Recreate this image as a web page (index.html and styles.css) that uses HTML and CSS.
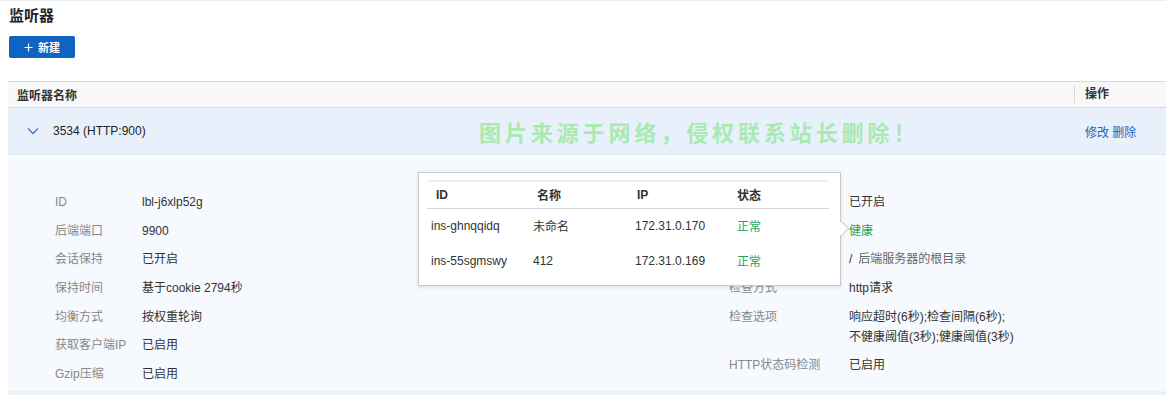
FILE: index.html
```html
<!DOCTYPE html>
<html lang="zh-CN">
<head>
    <meta charset="UTF-8">
    <title>监听器</title>
    <link rel="stylesheet" href="styles.css">
</head>
<body>
    <div class="page">
        <h1 class="title">监听器</h1>
        <button class="btn-new" type="button">
            <svg width="9" height="9" viewBox="0 0 9 9"><path d="M4.5 0.5v8M0.5 4.5h8" stroke="#fff" stroke-width="1.2"/></svg>
            <span>新建</span>
        </button>

        <div class="table">
            <div class="thead">
                <div class="cell-name">监听器名称</div>
                <div class="cell-ops">操作</div>
            </div>

            <div class="row">
                <div class="cell-name">
                    <svg class="chevron" width="12" height="8" viewBox="0 0 12 8"><path d="M1 1.5l5 5 5-5" fill="none" stroke="#3b7cc0" stroke-width="1.3"/></svg>
                    <span>3534 (HTTP:900)</span>
                </div>
                <div class="cell-ops links"><a>修改</a> <a>删除</a></div>
                <div class="watermark">图片来源于网络，侵权联系站长删除！</div>
            </div>

            <div class="detail">
                <div class="props">
                    <div class="col col-left">
                        <div class="prop"><span class="k">ID</span><span class="v">lbl-j6xlp52g</span></div>
                        <div class="prop"><span class="k">后端端口</span><span class="v">9900</span></div>
                        <div class="prop"><span class="k">会话保持</span><span class="v">已开启</span></div>
                        <div class="prop"><span class="k">保持时间</span><span class="v">基于cookie 2794秒</span></div>
                        <div class="prop"><span class="k">均衡方式</span><span class="v">按权重轮询</span></div>
                        <div class="prop"><span class="k">获取客户端IP</span><span class="v">已启用</span></div>
                        <div class="prop"><span class="k">Gzip压缩</span><span class="v">已启用</span></div>
                    </div>
                    <div class="col col-right">
                        <!-- labels of the first rows sit under the popover -->
                        <div class="prop"><span class="k"></span><span class="v">已开启</span></div>
                        <div class="prop"><span class="k"></span><span class="v ok">健康</span></div>
                        <div class="prop"><span class="k"></span><span class="v"><span class="path">/</span><span class="hint">后端服务器的根目录</span></span></div>
                        <div class="prop"><span class="k">检查方式</span><span class="v">http请求</span></div>
                        <div class="prop"><span class="k">检查选项</span><span class="v">响应超时(6秒);检查间隔(6秒);<br>不健康阈值(3秒);健康阈值(3秒)</span></div>
                        <div class="prop"><span class="k">HTTP状态码检测</span><span class="v">已启用</span></div>
                    </div>
                </div>

                <div class="popover">
                    <table class="inst">
                        <thead>
                            <tr><th>ID</th><th>名称</th><th>IP</th><th>状态</th></tr>
                        </thead>
                        <tbody>
                            <tr><td>ins-ghnqqidq</td><td>未命名</td><td>172.31.0.170</td><td class="ok">正常</td></tr>
                            <tr><td>ins-55sgmswy</td><td>412</td><td>172.31.0.169</td><td class="ok">正常</td></tr>
                        </tbody>
                    </table>
                    <span class="arrow"></span>
                </div>
            </div>
        </div>
    </div>
</body>
</html>
```

FILE: styles.css
```css
body {
    margin: 0;
    background-color: #fff;
    color: #333;
    font-family: 'Liberation Sans', 'Noto Sans CJK SC', sans-serif;
    font-size: 12px;
}

.page {
    border-top: 1px solid #eee;
    padding-left: 8px;
}

.title {
    margin: 5px 0 0 1px;
    font-size: 15px;
    line-height: 20px;
    font-weight: bold;
    color: #222;
}

.btn-new {
    display: flex;
    align-items: center;
    gap: 5px;
    margin: 10px 0 0 1px;
    width: 66px;
    height: 22px;
    padding: 0 0 0 15px;
    border: none;
    border-radius: 2px;
    background-color: #0f64c1;
    color: #fff;
    font-family: inherit;
    font-size: 11px;
    font-weight: bold;
}

.table {
    margin-top: 23px;
}

.thead {
    display: flex;
    height: 25px;
    border-top: 1px solid #d9d9d9;
    border-bottom: 1px solid #dadada;
    background-color: #f8f8f8;
    font-weight: bold;
    color: #333;
    align-items: center;
}

.cell-name {
    flex: 1;
    display: flex;
    align-items: center;
    padding-left: 9px;
}

.cell-ops {
    width: 81px;
    padding-left: 10px;
}

.thead .cell-ops {
    border-left: 1px solid #d5d5d5;
    height: 17px;
    line-height: 17px;
}

.row {
    position: relative;
    display: flex;
    align-items: center;
    height: 46px;
    background-color: #e8f0fb;
    border-bottom: 1px solid #e3e9f1;
}

.row .cell-name {
    padding-left: 19px;
    color: #222;
}

.chevron {
    margin-right: 14px;
}

.links a {
    color: #1f63b8;
}

.watermark {
    position: absolute;
    left: 471px;
    top: 10px;
    font-family: 'Noto Sans CJK SC', sans-serif;
    font-size: 22px;
    line-height: 26px;
    font-weight: bold;
    letter-spacing: 3.9px;
    color: #a8eab0;
}

.detail {
    position: relative;
    height: 240px;
    padding-top: 33px;
    box-sizing: border-box;
    background-color: #f6f9fd;
    border-bottom: 4px solid #edf1f6;
}

.props {
    display: flex;
    padding-left: 47px;
}

.col-left {
    width: 674px;
}

.prop {
    display: flex;
    padding: 4.3px 0;
    line-height: 20px;
}

.prop .k {
    color: #888;
}

.col-left .k {
    width: 87px;
}

.col-right .k {
    width: 120px;
}

.prop .v {
    color: #333;
}

.ok {
    color: #1ea55b !important;
}

.path {
    margin-right: 6px;
}

.hint {
    color: #666;
}

.popover {
    position: absolute;
    left: 410px;
    top: 17px;
    width: 423px;
    height: 114px;
    padding: 7px 0 0 8px;
    box-sizing: border-box;
    background-color: #fff;
    border: 1px solid #c9c9c9;
    box-shadow: 0 1px 4px rgba(0, 0, 0, 0.12);
}

.arrow {
    position: absolute;
    right: -7px;
    top: 50px;
    width: 10px;
    height: 10px;
    background-color: #fff;
    border-top: 1px solid #c9c9c9;
    border-right: 1px solid #c9c9c9;
    transform: rotate(45deg);
}

.inst {
    width: 402px;
    table-layout: fixed;
    border-collapse: collapse;
}

.inst th,
.inst td {
    box-sizing: border-box;
}

.inst th {
    height: 27px;
    padding: 0 0 0 9px;
    border-top: 2px solid #f0f0f0;
    border-bottom: 1px solid #d6d6d6;
    text-align: left;
    font-weight: bold;
    color: #333;
}

.inst td {
    height: 35px;
    padding: 0 0 0 4px;
    color: #333;
}

.inst th:nth-child(1) { width: 102px; }
.inst th:nth-child(2) { width: 102px; padding-left: 8px; }
.inst th:nth-child(3) { width: 102px; padding-left: 6px; }
.inst th:nth-child(4) { padding-left: 4px; }
```
